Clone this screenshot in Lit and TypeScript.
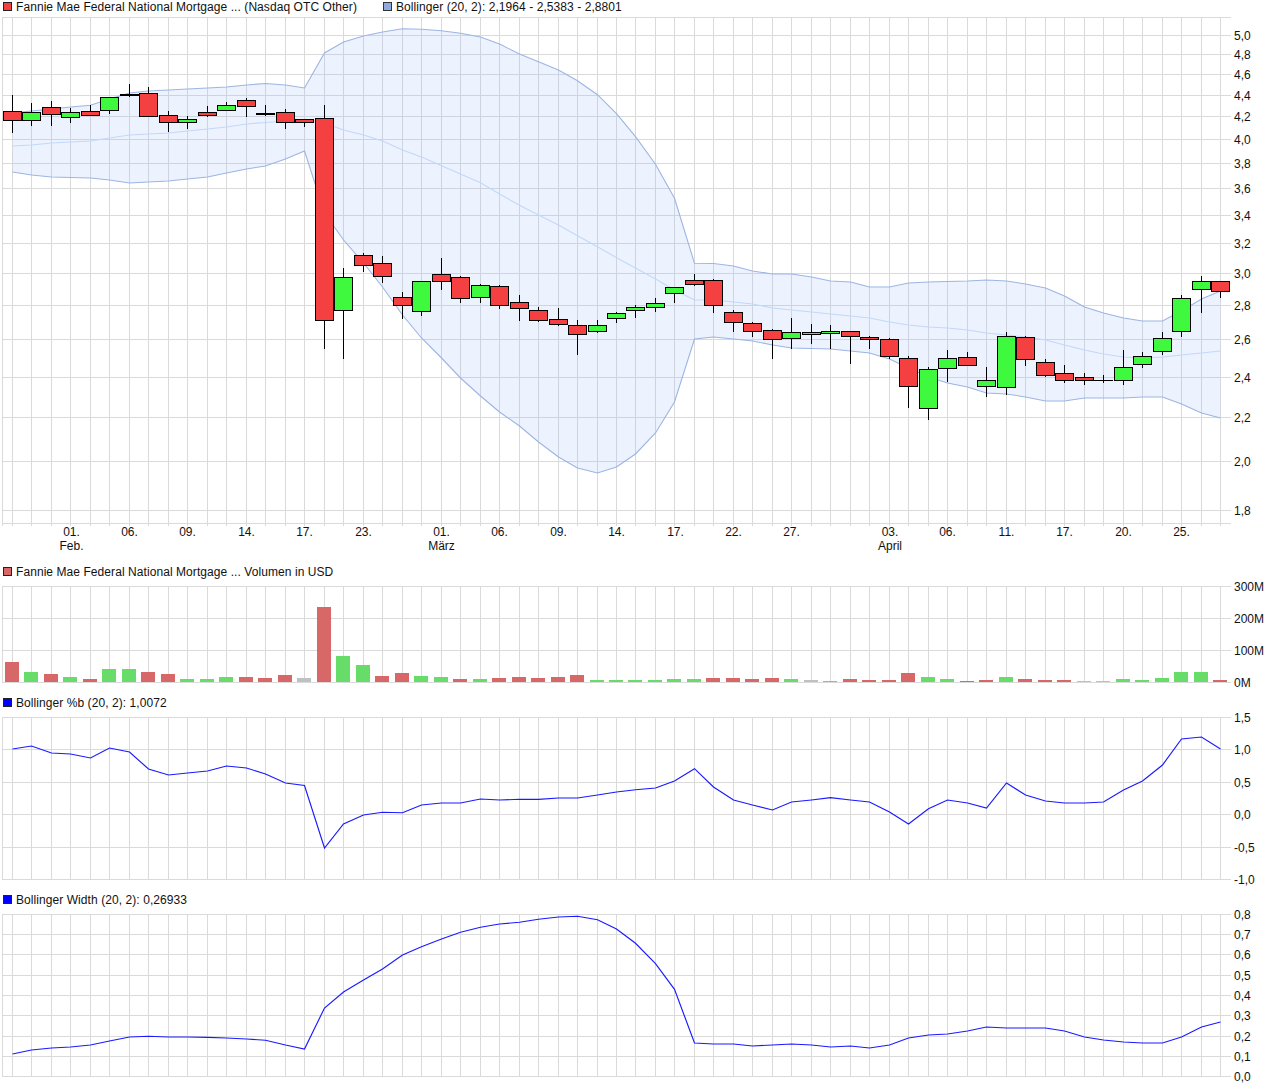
import { LitElement, html, css, svg } from "lit";
import { customElement } from "lit/decorators.js";

const N = 63;
const gx = (i: number) => Math.round(12 + 19.484 * i);

type C = [number, number, number, number, "r" | "g" | "k"];
const candles: C[] = [
  [95,133,111,120,"r"],[103,126,112,120,"g"],[101,126,107,114,"r"],[108,123,112,117,"g"],[105,115,111,115,"r"],
  [97,114,97,110,"g"],[84,97,94,95,"k"],[87,116,93,116,"r"],[111,132,115,122,"r"],[116,129,119,122,"g"],
  [106,117,112,115,"r"],[102,111,105,110,"g"],[98,117,100,106,"r"],[105,116,113,114,"k"],[109,129,112,122,"r"],
  [119,127,119,122,"r"],[105,349,118,320,"r"],[268,359,277,310,"g"],[253,272,255,265,"r"],[256,283,263,276,"r"],
  [292,319,297,305,"r"],[281,316,281,311,"g"],[258,290,274,281,"r"],[276,303,277,298,"r"],[284,303,285,297,"g"],
  [285,309,286,305,"r"],[295,321,302,308,"r"],[307,322,310,320,"r"],[308,326,319,324,"r"],[320,355,325,334,"r"],
  [320,333,325,331,"g"],[312,323,313,318,"g"],[305,318,307,310,"g"],[298,312,303,307,"g"],[287,303,287,293,"g"],
  [274,286,280,284,"r"],[279,313,280,305,"r"],[310,332,312,322,"r"],[322,337,323,331,"r"],[329,359,330,339,"r"],
  [318,349,332,338,"g"],[324,344,332,334,"g"],[325,349,331,333,"g"],[331,364,331,336,"r"],[336,349,337,339,"r"],
  [338,359,339,356,"r"],[356,408,358,386,"r"],[367,420,369,408,"g"],[350,382,358,368,"g"],[352,366,357,365,"r"],
  [367,397,380,386,"g"],[332,395,336,387,"g"],[336,366,337,359,"r"],[359,377,362,375,"r"],[365,383,373,380,"r"],
  [373,385,377,380,"r"],[375,383,380,380,"k"],[350,385,367,380,"g"],[352,368,356,364,"g"],[332,355,338,351,"g"],
  [295,337,298,331,"g"],[276,313,281,289,"g"],[281,298,281,291,"r"],
];

const upper = [113,111,109,107,105.3,99,93,91,90,89,88,87,85,83.5,85,88,53,42,36,32,28.7,29.3,30.7,33.3,37,44,54,61.7,70,80.7,94.7,113.7,136.7,164.3,198.3,263.3,263.5,266,271,274,274,277,281,282,287,287,283,282,281.5,281,280,281,284,288,296,307,313,318,321,321,311,299,291];
const mid = [146,145,143,142,141,138,135,134,133,131,129,127,124,122.5,121,119.5,123,130,135,141,150,157,165.7,174,182.7,194,205.3,215,225,235.7,246.7,257.7,268,279,290,300,300,302,304,308,310,312,314,316,318,322,325,327,328,330,333,335,337,340,345,350,354,357,358,357,355,353,351];
const lower = [172,175,177,177.5,178,180,183,182,181,179,177,173,169,166,159,151,213,240,263,287,315,338,358,378,396,412,426,442,457,468,473,467,454,433,402,339,337,339,341,345,348,348.5,349,351,353,359,368,377,383,387,393,394,397,401,401,398,398,398,397,397,404,413,418];

const volTop = [662,672,674,677,679,669,669,672,674,679,679,677,677,678,675,678,607,656,665,676,673,676,677,679,679,678,677,678,677,675,680,680,680,680,679,679,678,678,679,678,679,680,681,679,680,680,673,677,679,681,680,677,679,680,680,681,681,679,680,678,672,672,680];
const volCol = "rgrgrggrrgggrrrnrggrrggrgrrrrrggggggrrrrgngrrrrggrrgrrrnngggggr";

const pctB = [749,746,753,754,758,748,752,769,775,773,771,766,768,774,783,785.5,848,824,815,812.3,812.7,805,803,803,799,800,799.3,799.3,798,798,795,792,789.7,788,781,768.7,787,800,805,810,802,800,797.7,800,802,812,824,808.7,800,803,808,783,795,801,803,803,802,790,781,765,739,737,749];
const bWidth = [1054,1050,1048,1047,1045,1041,1037,1036.3,1037,1037,1037.3,1038,1039,1040.3,1045,1049,1008,992,980,969,955,946.7,939,932.3,927.3,924,922.3,919.3,917,916.3,919.7,929,943.3,963.7,989.3,1043,1044,1044,1046,1045,1044,1045,1047,1046,1048,1045,1038,1035,1034,1031,1027,1028,1028,1028,1031,1037,1040,1042,1043,1043,1037,1027,1022];

const path = (a: number[]) => a.map((y, i) => `${gx(i) + 0.5},${y}`).join(" ");

const mainTicks: [number, string][] = [[35,"5,0"],[54,"4,8"],[74,"4,6"],[95,"4,4"],[116,"4,2"],[139,"4,0"],[163,"3,8"],[188,"3,6"],[215,"3,4"],[243,"3,2"],[273,"3,0"],[305,"2,8"],[339,"2,6"],[377,"2,4"],[417,"2,2"],[461,"2,0"],[510,"1,8"]];
const volTicks: [number, string][] = [[586,"300M"],[618,"200M"],[650,"100M"],[682,"0M"]];
const pctTicks: [number, string][] = [[717,"1,5"],[749,"1,0"],[782,"0,5"],[814,"0,0"],[847,"-0,5"],[879,"-1,0"]];
const wTicks: [number, string][] = [[914,"0,8"],[934,"0,7"],[954,"0,6"],[975,"0,5"],[995,"0,4"],[1015,"0,3"],[1036,"0,2"],[1056,"0,1"],[1076,"0,0"]];
const dates: [number, string, string?][] = [[71.5,"01.","Feb."],[129.5,"06."],[187.5,"09."],[246.5,"14."],[304.5,"17."],[363.5,"23."],[441.5,"01.","März"],[499.5,"06."],[558.5,"09."],[616.5,"14."],[675.5,"17."],[733.5,"22."],[791.5,"27."],[890,"03.","April"],[947.5,"06."],[1006.5,"11."],[1064.5,"17."],[1123.5,"20."],[1181.5,"25."]];

function grid(top: number, bottom: number, rows: number[], stub = 0) {
  const verticals = [2, ...Array.from({ length: N }, (_, i) => gx(i))];
  return svg`
    ${rows.map((y) => svg`<line class="grid" x1="2" x2="1231" y1=${y + 0.5} y2=${y + 0.5}></line>`)}
    ${verticals.map((x) => svg`<line class="grid" x1=${x + 0.5} x2=${x + 0.5} y1=${top} y2=${bottom + 1 + stub}></line>`)}
  `;
}

function labels(ticks: [number, string][]) {
  return ticks.map(([y, t]) => svg`<text class="lbl" x="1234" y=${y + 4.5}>${t}</text>`);
}

@customElement("app-root")
export class AppRoot extends LitElement {
  static styles = css`
    :host {
      display: block;
      width: 1281px;
      height: 1090px;
      background: #fff;
      font-family: "Liberation Sans", Arial, sans-serif;
      font-size: 12px;
      color: #111;
      overflow: hidden;
    }
    .legend {
      display: flex;
      align-items: center;
      height: 13px;
      padding-left: 3px;
      white-space: nowrap;
      line-height: 13px;
    }
    .item {
      display: flex;
      align-items: center;
      gap: 4px;
    }
    .item.first {
      width: 380px;
    }
    .txt {
      padding-top: 2px;
      letter-spacing: 0.07px;
    }
    .sw {
      box-sizing: border-box;
      width: 9px;
      height: 9px;
      border: 1px solid #222;
    }
    .sw.red { background: #f44040; }
    .sw.band { background: #8fabdd; border-color: #333; }
    .sw.vol { background: #d86868; }
    .sw.blue { background: #0000ff; }
    svg {
      display: block;
      width: 1281px;
    }
    .main { height: 552px; }
    .volp { height: 118px; }
    .ind { height: 184px; }
    .grid { stroke: #dadada; stroke-width: 1; shape-rendering: crispEdges; }
    .lbl { font: 12px "Liberation Sans", Arial, sans-serif; fill: #111; }
    .date { font: 12px "Liberation Sans", Arial, sans-serif; fill: #111; text-anchor: middle; }
    .bandfill { fill: #8cb0fb; fill-opacity: 0.17; stroke: none; }
    .bandline { fill: none; stroke: #9db5e3; stroke-width: 1.1; }
    .midline { fill: none; stroke: #c2d8fb; stroke-width: 1.1; }
    .wick { stroke: #000; stroke-width: 1; shape-rendering: crispEdges; }
    .body { stroke: #000; stroke-width: 1; shape-rendering: crispEdges; }
    .body.r { fill: #f44040; }
    .body.g { fill: #3ff93f; }
    .doji { fill: #000; shape-rendering: crispEdges; }
    .vbar { shape-rendering: crispEdges; }
    .vbar.r { fill: #d86868; }
    .vbar.g { fill: #68dc68; }
    .vbar.n { fill: #c0c0c0; }
    .bline { fill: none; stroke: #1a1aff; stroke-width: 1.15; }
  `;

  private candle(c: C, i: number) {
    const [wt, wb, bt, bb, col] = c;
    const x = gx(i) + 0.5;
    return svg`
      <line class="wick" x1=${x} x2=${x} y1=${wt} y2=${wb}></line>
      ${col === "k"
        ? svg`<rect class="doji" x=${x - 9.5} y=${bt} width="19" height=${bb - bt + 1}></rect>`
        : svg`<rect class="body ${col}" x=${x - 9} y=${bt + 0.5} width="18" height=${bb - bt}></rect>`}
    `;
  }

  render() {
    const bandPts = path(upper) + " " + lower.map((y, i) => `${gx(i) + 0.5},${y}`).reverse().join(" ");
    return html`
      <div class="legend">
        <div class="item first"><span class="sw red"></span><span class="txt">Fannie Mae Federal National Mortgage ... (Nasdaq OTC Other)</span></div>
        <div class="item"><span class="sw band"></span><span class="txt">Bollinger (20, 2): 2,1964 - 2,5383 - 2,8801</span></div>
      </div>
      <svg class="main" viewBox="0 13 1281 552">
        ${grid(17, 523, [17, ...mainTicks.map((t) => t[0]), 523], 2)}
        <polygon class="bandfill" points=${bandPts}></polygon>
        <polyline class="midline" points=${path(mid)}></polyline>
        <polyline class="bandline" points=${path(upper)}></polyline>
        <polyline class="bandline" points=${path(lower)}></polyline>
        ${candles.map((c, i) => this.candle(c, i))}
        ${labels(mainTicks)}
        ${dates.map(([x, d, m]) => svg`
          <text class="date" x=${x} y="536">${d}</text>
          ${m ? svg`<text class="date" x=${x} y="550">${m}</text>` : null}
        `)}
      </svg>
      <div class="legend">
        <div class="item"><span class="sw vol"></span><span class="txt">Fannie Mae Federal National Mortgage ... Volumen in USD</span></div>
      </div>
      <svg class="volp" viewBox="0 578 1281 118">
        ${grid(586, 682, volTicks.map((t) => t[0]))}
        ${volTop.map((y, i) => svg`<rect class="vbar ${volCol[i]}" x=${gx(i) - 7} y=${y} width="14" height=${682 - y}></rect>`)}
        ${labels(volTicks)}
      </svg>
      <div class="legend">
        <div class="item"><span class="sw blue"></span><span class="txt">Bollinger %b (20, 2): 1,0072</span></div>
      </div>
      <svg class="ind" viewBox="0 709 1281 184">
        ${grid(717, 879, pctTicks.map((t) => t[0]))}
        <polyline class="bline" points=${path(pctB)}></polyline>
        ${labels(pctTicks)}
      </svg>
      <div class="legend">
        <div class="item"><span class="sw blue"></span><span class="txt">Bollinger Width (20, 2): 0,26933</span></div>
      </div>
      <svg class="ind" viewBox="0 906 1281 184">
        ${grid(914, 1076, wTicks.map((t) => t[0]))}
        <polyline class="bline" points=${path(bWidth)}></polyline>
        ${labels(wTicks)}
      </svg>
    `;
  }
}
